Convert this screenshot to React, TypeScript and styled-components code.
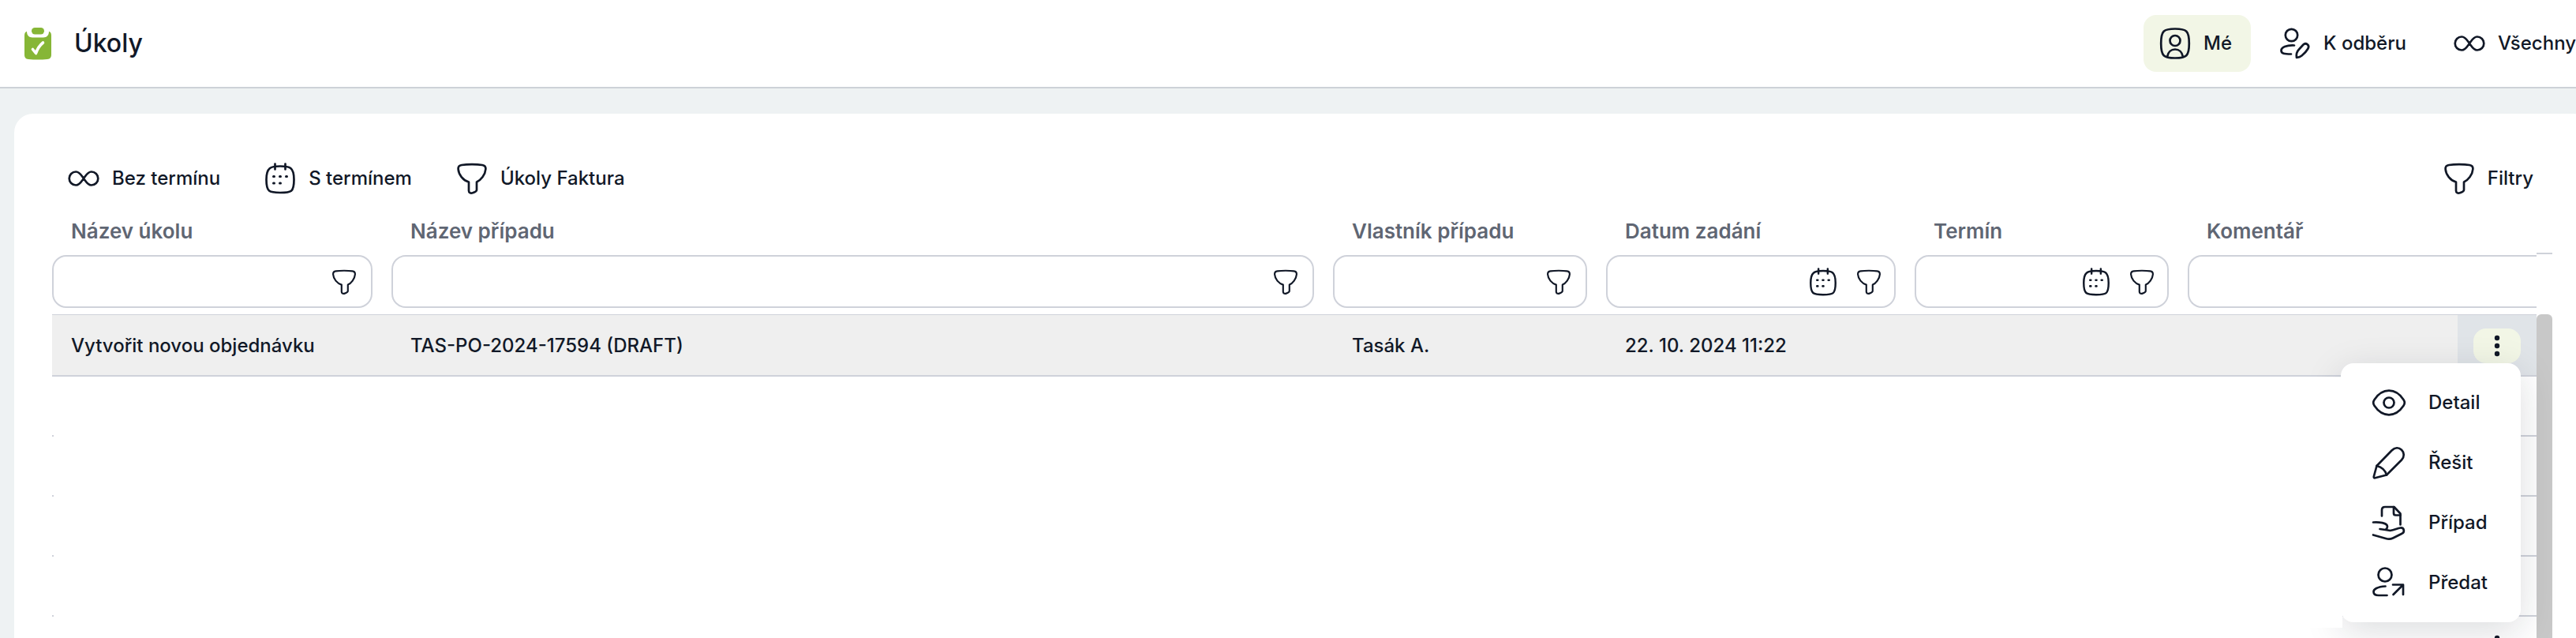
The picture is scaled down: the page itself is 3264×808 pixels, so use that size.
import React from "react";
import styled, { createGlobalStyle } from "styled-components";

const ink = "#111827";
const line = "#cfd2da";

const GlobalStyle = createGlobalStyle`
  * { box-sizing: border-box; }
  html, body, #root { height: 100%; }
  body {
    margin: 0;
    overflow: hidden;
    background: #eef2f3;
    color: ${ink};
    font: 500 24px/32px Inter, sans-serif;
  }
  button, input { font: inherit; color: inherit; }
`;

const Page = styled.div`
  display: flex;
  flex-direction: column;
  height: 100%;
  overflow: hidden;
`;

const Header = styled.header`
  display: flex;
  align-items: center;
  justify-content: space-between;
  flex: none;
  height: 112px;
  padding-left: 26px;
  background: #fff;
  border-bottom: 2px solid #cdd2d8;
`;

const Brand = styled.div`
  display: flex;
  align-items: center;
  gap: 24px;
`;

const Title = styled.h1`
  margin: 0;
  font-size: 32px;
  line-height: 40px;
  font-weight: 500;
`;

const Tabs = styled.nav`
  display: flex;
  flex: none;
  gap: 16px;
  margin-right: -24px;
`;

const Tab = styled.button<{ $active?: boolean }>`
  display: flex;
  align-items: center;
  gap: 16px;
  height: 72px;
  padding: 0 24px 0 20px;
  border: 0;
  border-radius: 16px;
  background: ${(p) => (p.$active ? "#f2f6e6" : "transparent")};
  white-space: nowrap;
`;

const Card = styled.main`
  display: flex;
  flex-direction: column;
  flex: 1;
  min-height: 0;
  margin: 32px -20px 0 18px;
  padding: 46px 50px 0 48px;
  border-radius: 24px 24px 0 0;
  background: #fff;
`;

const Toolbar = styled.div`
  display: flex;
  justify-content: space-between;
`;

const ToolGroup = styled.div`
  display: flex;
  gap: 12px;
`;

const Tool = styled.button`
  display: flex;
  align-items: center;
  gap: 16px;
  height: 72px;
  padding: 0 24px 0 20px;
  border: 0;
  background: transparent;
  white-space: nowrap;
`;

const Grid = styled.div`
  position: relative;
  display: flex;
  flex: 1;
  min-height: 0;
`;

const Viewport = styled.div`
  flex: 1;
  min-width: 0;
  overflow: hidden;
`;

const Table = styled.table`
  width: 100%;
  table-layout: fixed;
  border-collapse: separate;
  border-spacing: 0;
`;

const Col = styled.col<{ $w?: number }>`
  width: ${(p) => (p.$w ? `${p.$w}px` : "auto")};
`;

const HeadCell = styled.th`
  height: 61px;
  padding: 0 24px;
  color: #5f6673;
  font-size: 26px;
  font-weight: 600;
  text-align: left;
`;

const FilterCell = styled.td<{ $last?: boolean }>`
  height: 76px;
  padding: 0 ${(p) => (p.$last ? 0 : 24)}px 8px 0;
  border-bottom: 1px solid ${line};
`;

const FilterBox = styled.div<{ $open?: boolean; $date?: boolean }>`
  display: flex;
  align-items: center;
  gap: 24px;
  height: 67px;
  padding: 0 ${(p) => (p.$date ? 16 : 18)}px 0 18px;
  border: 2px solid ${line};
  border-radius: 18px;
  ${(p) => p.$open && "border-right: 0; border-radius: 18px 0 0 18px;"}
`;

const FilterInput = styled.input`
  flex: 1;
  min-width: 0;
  border: 0;
  outline: 0;
  background: transparent;
`;

const IconButton = styled.button`
  display: flex;
  padding: 0;
  border: 0;
  background: transparent;
`;

const Row = styled.tr<{ $selected?: boolean }>`
  background: ${(p) => (p.$selected ? "#efefef" : "#fff")};
`;

const Cell = styled.td<{ $action?: boolean; $selected?: boolean }>`
  height: ${(p) => (p.$selected ? 78 : 76)}px;
  padding: ${(p) => (p.$selected ? 2 : 0)}px ${(p) => (p.$action ? 20 : 24)}px 0;
  border-bottom: 2px solid ${line};
  white-space: nowrap;
  ${(p) => p.$action && p.$selected && "background: #e0e4e8;"}
`;

const MoreButton = styled.button<{ $active?: boolean }>`
  display: flex;
  align-items: center;
  justify-content: center;
  width: 60px;
  height: 44px;
  padding: 0;
  border: 0;
  border-radius: 16px;
  background: ${(p) => (p.$active ? "#f2f6e6" : "transparent")};
`;

const Rail = styled.div`
  display: flex;
  flex-direction: column;
  flex: none;
  width: 20px;
`;

const RailHead = styled.div`
  height: 136px;
  padding-top: 58px;
`;

const RailRule = styled.div`
  height: 2px;
  background: ${line};
`;

const Thumb = styled.div`
  flex: 1;
  border-radius: 6px 6px 0 0;
  background: #c8c8c8;
`;

const Veil = styled.div`
  position: absolute;
  top: 216px;
  left: 2px;
  right: 266px;
  height: 317px;
  background: #fff;
`;

const Menu = styled.div`
  position: absolute;
  top: 198px;
  right: 40px;
  display: flex;
  flex-direction: column;
  width: 228px;
  padding: 12px 0;
  border-radius: 16px;
  background: #fff;
  box-shadow: 0 12px 48px rgba(17, 24, 39, 0.15);
`;

const MenuItem = styled.button`
  display: flex;
  align-items: center;
  gap: 28px;
  height: 76px;
  padding: 0 0 0 39px;
  border: 0;
  background: transparent;
  white-space: nowrap;
`;

const Svg = styled.svg`
  display: block;
  flex: none;
  overflow: visible;
  fill: none;
  stroke: currentColor;
  stroke-width: 2.7;
  stroke-linecap: round;
  stroke-linejoin: round;
`;

type IconProps = { size?: number };

const Infinity2 = () => (
  <Svg width="40" height="40" viewBox="0 0 40 40">
    <path d="M20 20c-3 4-5 8.500-9.800 8.500a8.500 8.500 0 0 1 0-17c4.800 0 6.800 4.500 9.800 8.500s5 8.500 9.800 8.500a8.500 8.500 0 0 0 0-17c-4.800 0-6.800 4.500-9.800 8.500z" />
  </Svg>
);

const Calendar = ({ size = 40 }: IconProps) => (
  <Svg width={size} height={size} viewBox="0 0 40 40">
    <path d="M20 4.500c12 0 17.500 1 17.500 17S34 38 20 38 2.500 37 2.500 21.500 8 4.500 20 4.500z" />
    <path d="M13.500 1.500v7M26.500 1.500v7" />
    <path strokeWidth="3" d="M11.500 17.500h1M19.500 17.500h1M27.500 17.500h1M11.500 26h1M19.500 26h1" />
  </Svg>
);

const Funnel = ({ size = 40 }: IconProps) => (
  <Svg width={size} height={size} viewBox="0 0 40 40">
    <path d="M20 2.200c5 0 9 .2 13 .8 3 .4 4.600 2 4.400 5C36.900 15.500 31 22.500 26 24.500v10c0 2-2.500 3-5 3.800-3 .9-5-.3-5-2.800v-11C9 22.500 3.100 15.500 2.600 8 2.400 5 4 3.400 7 3c4-.6 8-.8 13-.8z" />
  </Svg>
);

const UserBox = () => (
  <Svg width="40" height="40" viewBox="0 0 40 40">
    <path d="M20 1.500c14.500 0 17.800 2.500 17.800 18.500S34.500 38.500 20 38.500 2.200 36 2.200 20 5.500 1.500 20 1.500z" />
    <circle cx="20" cy="16.500" r="6.500" />
    <path d="M10 37c1-6 5-9.500 10-9.500S29 31 30 37" />
  </Svg>
);

const UserEdit = () => (
  <Svg width="40" height="40" viewBox="0 0 40 40">
    <circle cx="15.500" cy="9.500" r="7.700" />
    <path d="M19 22.500C9 22 2.500 25 2.500 29s4 4.500 12.500 4.500" />
    <path d="M22 38c-.8-5 .5-8 3-10.500l5.500-6c3-3 8.500.5 6 5-2 3.500-5 6.500-8 9-2 1.600-4 2.300-6.500 2.500z" />
  </Svg>
);

const Eye = () => (
  <Svg width="44" height="44" viewBox="0 0 44 44">
    <path d="M22 6.700c9 0 14.500 5.500 18.500 11.500 1.700 2.500 1.700 5.100 0 7.600C36.500 31.800 31 37.300 22 37.300S7.500 31.800 3.500 25.800c-1.700-2.500-1.700-5.100 0-7.600C7.500 12.200 13 6.700 22 6.700z" />
    <circle cx="22" cy="22" r="6.500" />
  </Svg>
);

const Pencil = () => (
  <Svg width="44" height="44" viewBox="0 0 44 44">
    <path d="M6.500 26 25.500 6.500c4-4 9-4 12.500-.7s3.800 8.700 0 12.700L19 37.500 4.500 41.200c-1.300.3-2-.4-1.700-1.700z" />
    <path d="M6.500 26c6 1.500 11 6 12.500 11.500" />
  </Svg>
);

const HandDoc = () => (
  <Svg width="44" height="44" viewBox="0 0 44 44">
    <path d="M13 13.500V6c0-2.500 1.500-4 4-4h11.500l8 8.500v14" />
    <path d="M28 2v8c0 1.500 1 2.500 2.500 2.500h6" />
    <path d="M2 21.500c7-.5 18 .5 18 5.500 0 1.800-1 3-2.500 4l-7-1M17.500 31l6 1c6-1 9-3 13-3.500 5-.5 6 6 1.500 7.500L27 41.500c-3 1.500-6 1.500-9 .5L2 37.500" />
  </Svg>
);

const UserOut = () => (
  <Svg width="44" height="44" viewBox="0 0 44 44">
    <circle cx="17" cy="12" r="8.500" />
    <path d="M17.500 26.500C7 27 2.500 30.500 2.500 33.500S4.500 38 9 38h10.500M27 24.500h13V37M39.500 25 27.500 37" />
  </Svg>
);

const Dots = () => (
  <Svg width="8" height="32" viewBox="0 0 8 32">
    <g fill="currentColor" stroke="none">
      <circle cx="4" cy="6" r="3.200" />
      <circle cx="4" cy="16" r="3.200" />
      <circle cx="4" cy="26" r="3.200" />
    </g>
  </Svg>
);

const Clipboard = () => (
  <Svg width="44" height="44" viewBox="0 0 44 44">
    <g stroke="none" fill="#86b636">
      <path d="M8 6.800C8 12 11 14.500 15 14.500h14c4 0 7-2.500 7-7.700 2 .7 3 2.200 3 5.200v24c0 4-1.500 5.500-5 6-8 .7-16 .7-24 0-3.500-.5-5-2-5-6V12c0-3 1-4.500 3-5.200z" />
      <rect x="14" y="2" width="16" height="8.500" rx="4.200" />
    </g>
    <path stroke="#fff" strokeWidth="3.600" d="m15.500 29.500 4 5c2-6 4-9.500 9-13.500" />
  </Svg>
);

const columns = [
  { label: "Název úkolu", width: 430 },
  { label: "Název případu" },
  { label: "Vlastník případu", width: 346 },
  { label: "Datum zadání", width: 391, date: true },
  { label: "Termín", width: 346, date: true },
  { label: "Komentář", width: 342, open: true },
];

const rows = [
  ["Vytvořit novou objednávku", "TAS-PO-2024-17594 (DRAFT)", "Tasák A.", "22. 10. 2024 11:22", "", ""],
  ["", "", "", "", "", ""],
  ["", "", "", "", "", ""],
  ["", "", "", "", "", ""],
  ["", "", "", "", "", ""],
  ["Vyřizovat podání", "", "Tasák A.", "", "", ""],
];

export default function App() {
  return (
    <Page>
      <GlobalStyle />
      <Header>
        <Brand>
          <Clipboard />
          <Title>Úkoly</Title>
        </Brand>
        <Tabs>
          <Tab $active><UserBox />Mé</Tab>
          <Tab><UserEdit />K odběru</Tab>
          <Tab><Infinity2 />Všechny</Tab>
        </Tabs>
      </Header>
      <Card>
        <Toolbar>
          <ToolGroup>
            <Tool><Infinity2 />Bez termínu</Tool>
            <Tool><Calendar />S termínem</Tool>
            <Tool><Funnel />Úkoly Faktura</Tool>
          </ToolGroup>
          <Tool><Funnel />Filtry</Tool>
        </Toolbar>
        <Grid>
          <Viewport>
            <Table>
              <colgroup>
                {columns.map((c) => <Col key={c.label} $w={c.width} />)}
                <Col $w={100} />
              </colgroup>
              <thead>
                <tr>
                  {columns.map((c) => (
                    <HeadCell key={c.label} scope="col" colSpan={c.open ? 2 : 1}>{c.label}</HeadCell>
                  ))}
                </tr>
                <tr>
                  {columns.map((c) => (
                    <FilterCell key={c.label} colSpan={c.open ? 2 : 1} $last={c.open}>
                      <FilterBox $open={c.open} $date={c.date}>
                        <FilterInput aria-label={c.label} />
                        {c.date && <IconButton aria-label="Kalendář"><Calendar size={36} /></IconButton>}
                        {!c.open && <IconButton aria-label="Filtr"><Funnel size={32} /></IconButton>}
                      </FilterBox>
                    </FilterCell>
                  ))}
                </tr>
              </thead>
              <tbody>
                {rows.map((r, i) => (
                  <Row key={i} $selected={i === 0}>
                    {r.map((text, j) => <Cell key={j} $selected={i === 0}>{text}</Cell>)}
                    <Cell $action $selected={i === 0}>
                      <MoreButton $active={i === 0} aria-label="Akce"><Dots /></MoreButton>
                    </Cell>
                  </Row>
                ))}
              </tbody>
            </Table>
          </Viewport>
          <Rail>
            <RailHead><RailRule /></RailHead>
            <Thumb />
          </Rail>
          <Menu>
            <MenuItem><Eye />Detail</MenuItem>
            <MenuItem><Pencil />Řešit</MenuItem>
            <MenuItem><HandDoc />Případ</MenuItem>
            <MenuItem><UserOut />Předat</MenuItem>
          </Menu>
          <Veil />
        </Grid>
      </Card>
    </Page>
  );
}
